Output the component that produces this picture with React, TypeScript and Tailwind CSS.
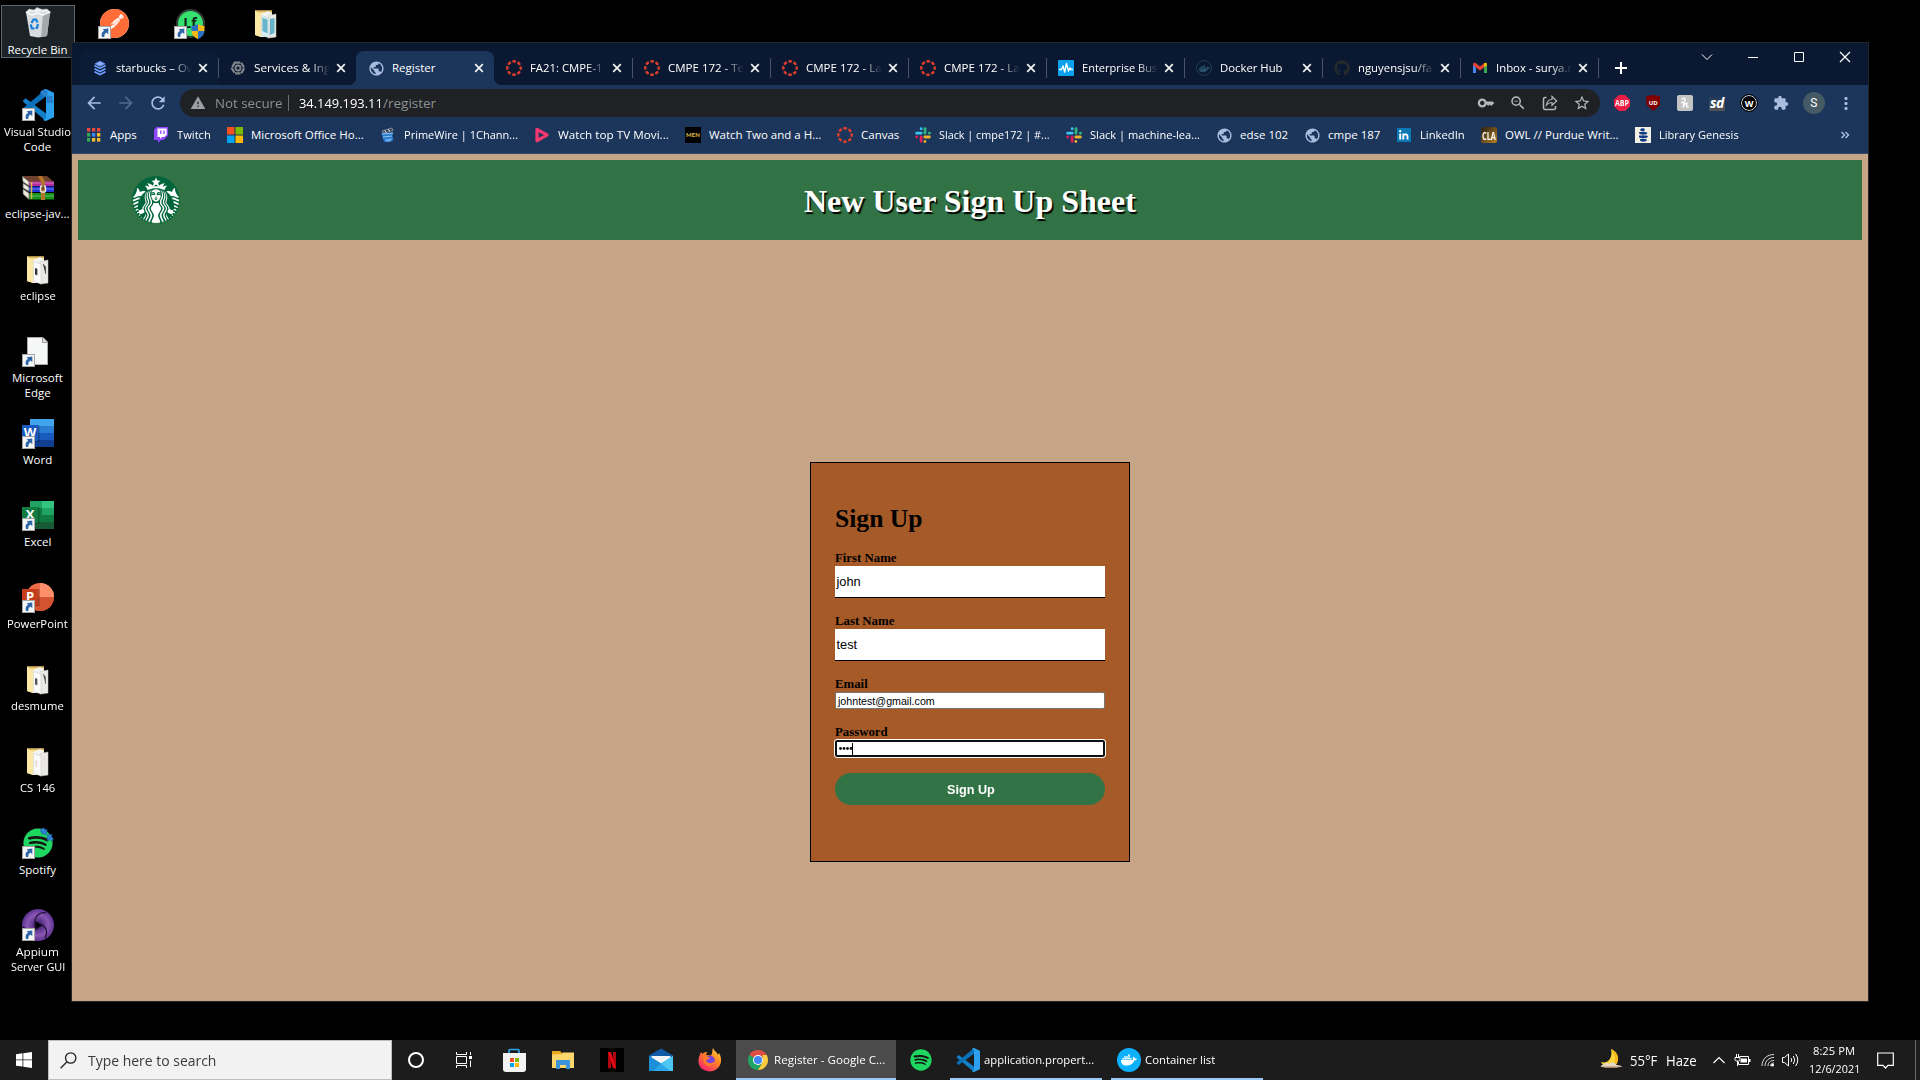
import React, { useLayoutEffect, useRef, useState } from "react";
import { SiStarbucks, SiPostman } from "react-icons/si";
import { FaDocker, FaGithub, FaSpotify } from "react-icons/fa";
import { MdKey, MdExtension, MdStarBorder, MdZoomOut, MdWarning, MdPublic, MdRefresh, MdArrowBack, MdArrowForward } from "react-icons/md";

/** Single line of text stretched or condensed to an exact width. */
function Fit({ w, className = "", children }: { w: number; className?: string; children: string }) {
  const ref = useRef<HTMLSpanElement>(null);
  const [scale, setScale] = useState(1);
  useLayoutEffect(() => {
    if (ref.current) setScale(w / ref.current.offsetWidth);
  }, [w, children]);
  return (
    <span className={"block shrink-0 whitespace-nowrap " + className} style={{ width: w }}>
      <span ref={ref} className="inline-block origin-left whitespace-nowrap" style={{ transform: `scaleX(${scale})` }}>
        {children}
      </span>
    </span>
  );
}

type SvgProps = { className?: string };

const Ring = () => (
  <svg viewBox="0 0 16 16" className="size-4">
    <circle cx="8" cy="8" r="6.7" fill="none" stroke="#e13f2b" strokeWidth="2.4" strokeDasharray="3.5 1.762" strokeDashoffset="1.75" />
  </svg>
);

const Globe = () => <MdPublic className="size-[17px] text-[#a9bddf]" />;

const Layers = () => (
  <svg viewBox="0 0 16 16" className="size-4" fill="none" stroke="#6f9dff" strokeWidth="1.7">
    <path d="M8 1.3 13 3.8 8 6.3 3 3.8Z" fill="#8bb0ff" stroke="#5c86ea" strokeWidth="1" />
    <path d="M2.500 5.600 8 8.400l5.500-2.800M2.500 8.700 8 11.500l5.500-2.800M2.500 11.700 8 14.500l5.500-2.800" />
  </svg>
);

const Hexagon = () => (
  <svg viewBox="0 0 16 16" className="size-4" fill="none" stroke="#80868b">
    <path d="M4.800 2.600h6.400L14.300 8l-3.100 5.400H4.800L1.700 8Z" strokeWidth="2.200" strokeDasharray="5.500 1" />
    <circle cx="8" cy="8" r="2.500" strokeWidth="1.800" />
  </svg>
);

const Pulse = () => (
  <svg viewBox="0 0 16 16" className="size-4">
    <rect width="16" height="16" rx="1" fill="#0aa1ee" />
    <path d="M1 9.500h2.500L5 6l1.700 6L8.500 3.500l2 7.500 1.500-3 1 1.500h2" fill="none" stroke="#fff" strokeWidth="1.400" strokeLinejoin="round" />
  </svg>
);

const Gmail = () => (
  <svg viewBox="0 0 16 16" className="size-4">
    <path d="M1 4.500v8.500h3V7.500Z" fill="#4285f4" />
    <path d="M15 4.500v8.500h-3V7.500Z" fill="#34a853" />
    <path d="M1 4.300C1 2.600 2.600 2.200 4 3.200l4 3.200 4-3.200v4.200L8 10.600 1 5.300Z" fill="#ea4335" />
    <path d="M12 3.200c1.400-1 3-.6 3 1.100v1L12 7.500Z" fill="#fbbc04" />
  </svg>
);

const DockerDim = () => (
  <span className="grid size-4 place-items-center rounded-full border border-[#1d3d52] text-[#27506a]">
    <FaDocker className="size-[11px]" />
  </span>
);

const Slack = () => (
  <svg viewBox="0 0 16 16" className="size-4" strokeWidth="2.800" strokeLinecap="round">
    <path d="M1.600 6.200h4.600M6.200 1.600v.2" stroke="#36c5f0" />
    <path d="M10 1.600v4.600M14.400 6.200h.1" stroke="#2eb67d" />
    <path d="M14.400 10h-4.600M9.900 14.400v.1" stroke="#ecb22e" />
    <path d="M6.100 14.400V9.900M1.600 10h.1" stroke="#e01e5a" />
  </svg>
);

const AppsGrid = () => (
  <svg viewBox="0 0 16 16" className="size-4">
    {["#e8453c", "#e8453c", "#e8453c", "#34a853", "#4285f4", "#f9bb2d", "#34a853", "#f9bb2d", "#f9bb2d"].map((c, i) => (
      <rect key={i} x={1 + (i % 3) * 5} y={1 + Math.floor(i / 3) * 5} width="3.300" height="3.600" fill={c} />
    ))}
  </svg>
);

const Twitch = () => (
  <svg viewBox="0 0 16 16" className="size-4">
    <path d="M3.500 0H15v8.500L10.500 13H8l-3 3v-3H1V3Z" fill="#9146ff" />
    <path d="M4.500 1.500h9.200v6.300L11.500 10H9l-2 2v-2H4.500Z" fill="#fff" />
    <path d="M7.800 3.500v3.600M11 3.500v3.600" stroke="#9146ff" strokeWidth="1.300" />
  </svg>
);

const MsLogo = () => (
  <svg viewBox="0 0 16 16" className="size-4">
    <path d="M0 0h7.500v7.500H0Z" fill="#f25022" />
    <path d="M8.500 0H16v7.500H8.500Z" fill="#7fba00" />
    <path d="M0 8.500h7.500V16H0Z" fill="#00a4ef" />
    <path d="M8.500 8.500H16V16H8.500Z" fill="#ffb900" />
  </svg>
);

const Clapper = () => (
  <svg viewBox="0 0 16 16" className="size-4">
    <path d="m2 4 10-3 1 2.500L3 6Z" fill="#30363f" stroke="#9fb2c4" strokeWidth=".7" />
    <path d="m4.500 3.500 2 1.700M8 2.400l2 1.600" stroke="#e8eef5" />
    <path d="M1.500 6.500 13 5.500l-.5 3 1 5-9 1.500L3 12Z" fill="#2878c8" />
    <path d="m2 7 11-.8M3 10l9-1" stroke="#8fc4f4" strokeWidth="1.200" />
    <path d="m5 12 7-.6-1 3-5 .6Z" fill="#63a9ea" />
  </svg>
);

const PlayPink = () => (
  <svg viewBox="0 0 16 16" className="size-4" fill="none" strokeLinejoin="round">
    <path d="M3 2.300 13 8 3 13.700Z" stroke="#f5386f" strokeWidth="3.200" />
    <path d="M5.500 5.800 9.500 8l-4 2.300Z" fill="#1b355b" />
  </svg>
);

const Men = () => (
  <span className="grid size-4 place-items-center bg-black font-['Lato'] text-[6px] leading-none font-black text-[#d9b84a]">MEN</span>
);

const LinkedIn = () => (
  <svg viewBox="0 0 16 16" className="size-4">
    <rect x="1" y="1" width="14" height="14" fill="#0a78b5" />
    <path d="M4.200 6.500v6M7.300 12.500v-6M7.300 9.500c0-2.800 4.200-3 4.200 0v3" fill="none" stroke="#fff" strokeWidth="1.900" />
    <circle cx="4.200" cy="4.100" r="1.200" fill="#fff" />
  </svg>
);

const Cla = () => (
  <span className="grid size-4 place-items-center overflow-hidden rounded-xs bg-linear-to-br from-[#2b2010] to-[#b98322]">
    <Fit w={14} className="text-[11px] leading-none font-bold text-white">CLA</Fit>
  </span>
);

const LibGen = () => (
  <svg viewBox="0 0 16 16" className="size-4">
    <rect width="16" height="16" fill="#f2f0e4" />
    <path d="M6 1.500h3l1 1.500-1 1H6L5 3ZM4 5h7l1.500 1-1.500 1.500H6.500L4.500 7ZM4 8.500h8l1 1-1.500 1.500H6L4 10.500ZM5 12h6l1 1-1.500 1.500h-4L5 13.500Z" fill="#113a84" />
    <path d="M8 1v14" stroke="#113a84" strokeWidth=".8" />
  </svg>
);

const VsCode = ({ className = "" }: SvgProps) => (
  <svg viewBox="0 0 32 32" className={className}>
    <path d="M1 11.500 3.500 9.300 24 24.500V32L1.300 13Z" fill="#1180c8" />
    <path d="M1 20.500 3.500 22.700 24 7.500V0L1.300 19Z" fill="#0a70b8" />
    <path d="M22.500 0 32 4v24l-9.500 4-1.200-1.500 2.700-1V2.500l-2.700-1Z" fill="#2ba3ef" />
    <path d="M24 0 32 4v24l-8 4Z" fill="#2aa0ee" />
  </svg>
);

const Shortcut = () => (
  <svg viewBox="0 0 13 13" className="absolute bottom-0 left-0 size-[13px]">
    <rect x=".5" y=".5" width="12" height="12" fill="#f6f6f6" stroke="#a5a5a5" />
    <path d="M4 11c-1-3.500.2-5.200 2.200-6L4.700 3.300 10.300 2.500v5.700L8.500 6.600C7 7.400 6.300 8.500 6.300 11Z" fill="#2d65a8" />
  </svg>
);

const SyncArrows = () => (
  <svg viewBox="0 0 16 16" className="absolute top-0 right-0 size-4" fill="#2d83cf" stroke="#1b65ad" strokeWidth=".6">
    <path d="m3 2 3-1 1 2 2-.5-.5 5-5-.5L5 5.500 2.500 5ZM9 8l5-.5-.7 2 2 2.500-1.500 2-2.500-1.500L9.700 14Z" />
  </svg>
);

const Folder = ({ ink = "#444", blue = false }: { ink?: string; blue?: boolean }) => (
  <svg viewBox="0 0 32 32" className="size-8">
    <path d="M5 3.500h17V29L11 30 5 28Z" fill="#f7dc8b" />
    <path d="M5 3.500h17v1.500H5Z" fill="#d9b25c" />
    <path d="M11 7 18 4l3.500 2v24l-3-.5L11 30Z" fill="#f4f4f2" />
    <path d="M18 8.500 26 7v23l-7 1Z" fill="#e9e9e6" stroke="#c4c4c0" strokeWidth=".5" />
    <path d="M11.500 8.500 19 11v20.300L11.500 28Z" fill={blue ? "#d8edf2" : "#fafafa"} stroke="#bbb" strokeWidth=".4" />
    {blue ? (
      <path d="m12.500 11 5 1.600v14l-5-2.600ZM20 12l4.500-1v15L20 28Z" fill="#66b4c9" />
    ) : (
      <path d="M13 15.500l2 .5v6l-2-1M21 11l2.500 3v7" fill={ink} stroke={ink} strokeWidth=".7" />
    )}
    <path d="m5 3.500 6 4V30l-6-2Z" fill="#fde9a6" />
  </svg>
);

const RecycleBin = () => (
  <svg viewBox="0 0 32 32" className="size-8">
    <path d="m4 5 3-3 5 1 3-2.500 5 2L25 2l3.500 3L26 10H6Z" fill="#eceeef" stroke="#aab0b4" strokeWidth=".6" />
    <path d="m4 5 24-.2L25 29l-9 1.500L8 29Z" fill="#d9dcde" />
    <path d="M21 7 28 5l-3 24-6 1.300Z" fill="#a4a9ac" />
    <path d="m4 5 6 3 5-2 6 2 7-3" fill="none" stroke="#fff" strokeWidth="1.300" />
    <path d="m9.500 16 2-3.500h2.500l1.500 3M8.500 17.500l1.500 4h2.500M16 17l-1 4h-1.500" fill="none" stroke="#1580dc" strokeWidth="2.200" />
  </svg>
);

const Books = () => (
  <svg viewBox="0 0 32 32" className="size-8">
    <path d="M0 5h25l7 6H7Z" fill="#70412c" />
    <path d="M7 10.500h25v4.500H7Z" fill="#b42c9d" />
    <path d="M7 15.500h25V21H7Z" fill="#2335d8" />
    <path d="M7 22h25v6.500H7Z" fill="#16951d" />
    <path d="m0 5 7 5.500v4.500L1 11ZM1 12l6 4v4.500L1 17ZM1 18l6 4v6.500L1 23Z" fill="#ece8dc" stroke="#555" strokeWidth=".7" />
    <path d="M7 12h25M7 18h25M7 25h25" stroke="#ffffff" strokeOpacity=".35" />
    <path d="M16 5h4l3 5v19h-4V11Z" fill="#b5742d" />
    <path d="M9.500 11v17" stroke="#d9b53c" strokeWidth="1.500" />
    <rect x="18.500" y="15" width="5" height="6" rx="1" fill="none" stroke="#e4e4e4" strokeWidth="1.400" />
    <path d="M21 14v5" stroke="#222" />
  </svg>
);

const BlankDoc = () => (
  <svg viewBox="0 0 32 32" className="size-8">
    <path d="M5.500 2.500H21L25.500 7v22.500h-20Z" fill="#f6f7f7" stroke="#aaa" />
    <path d="M20.500 2.500V7.500h5" fill="#ddd" stroke="#999" />
  </svg>
);

function Office({ letter, colors, tile, round }: { letter: string; colors: string[]; tile: string; round?: boolean }) {
  return (
    <span className="relative block size-8">
      <svg viewBox="0 0 32 32" className="size-8">
        {round ? (
          <>
            <circle cx="18" cy="16" r="14" fill={colors[0]} />
            <path d="M18 2a14 14 0 0 1 14 14H18Z" fill={colors[1]} />
            <path d="M4 16h28a14 14 0 0 1-28 0Z" fill={colors[2]} />
          </>
        ) : (
          colors.map((c, i) => <rect key={i} x="8" y={2 + i * 7} width="24" height="7" fill={c} />)
        )}
        {letter === "X" && <path d="M20 2h12v7H20Z" fill="#33c481" />}
        {letter === "X" && <path d="M20 9h12v7H20Z" fill="#21a366" />}
        {letter === "X" && <path d="M8 9h12v7H8Z" fill="#107c41" />}
        <path d="M8 8h9.500v17H8Z" fill="#000" fillOpacity=".25" />
        <rect y="8" width="16" height="16" fill={tile} />
      </svg>
      <span className="absolute top-[8px] left-0 w-4 text-center text-[13px] leading-[15px] font-bold text-white">{letter}</span>
    </span>
  );
}

const Appium = () => (
  <svg viewBox="0 0 32 32" className="size-8">
    <defs>
      <radialGradient id="appium">
        <stop offset=".2" stopColor="#4e2a7c" />
        <stop offset=".65" stopColor="#8a57b4" />
        <stop offset="1" stopColor="#5f3291" />
      </radialGradient>
    </defs>
    <circle cx="16" cy="16" r="16" fill="url(#appium)" />
    <path d="M13 12.500 20 16l-6 4.500Z" fill="#000" />
    <path d="M13 20V11C14 6 19 2.500 24 4M12.500 12 21 16.500c4 3 4.500 8 2 12.500M20.500 16 13 20.500C9 23 4 21 1 18" fill="none" stroke="#1c0c30" strokeWidth="1.200" />
  </svg>
);

const Spotify = ({ className = "" }: SvgProps) => (
  <span className={"grid place-items-center rounded-full bg-[#191414] text-[#1ed760] " + className}>
    <FaSpotify className="size-full" />
  </span>
);

const Postman = () => (
  <span className="grid size-[29px] place-items-center rounded-full bg-white text-[#ff6c37]">
    <SiPostman className="size-full" />
  </span>
);

const Lockfile = () => (
  <span className="relative grid size-[29px] place-items-center rounded-full border-[2px] border-[#333b38] bg-[#36e06f] text-[14px] leading-none font-bold text-[#10231a]">
    Lf
    <svg viewBox="0 0 14 15" className="absolute -right-[2px] -bottom-[3px] h-[15px] w-[14px]">
      <path d="M7 0c2 1.300 4 2 6.500 2v5H7Z" fill="#f7b916" />
      <path d="M7 0C5 1.300 3 2 .5 2v5H7Z" fill="#2a6fc4" />
      <path d="M.5 7H7v8C3.500 13.500.8 11 .5 7Z" fill="#f7b916" />
      <path d="M13.500 7H7v8c3.500-1.500 6.200-4 6.500-8Z" fill="#2a6fc4" />
    </svg>
  </span>
);

type DeskItem = { icon: React.ReactNode; lines: [string, number][]; shortcut?: boolean; sync?: boolean; selected?: boolean };

const desk: DeskItem[] = [
  { icon: <RecycleBin />, lines: [["Recycle Bin", 60]], selected: true },
  { icon: <VsCode className="size-8" />, lines: [["Visual Studio", 67], ["Code", 28]], shortcut: true, sync: true },
  { icon: <Books />, lines: [["eclipse-jav...", 65]] },
  { icon: <Folder ink="#333" />, lines: [["eclipse", 36]] },
  { icon: <BlankDoc />, lines: [["Microsoft", 51], ["Edge", 26]], shortcut: true },
  { icon: <Office letter="W" tile="#185abd" colors={["#41a5ee", "#2b7cd3", "#185abd", "#103f91"]} />, lines: [["Word", 29]], shortcut: true },
  { icon: <Office letter="X" tile="#107c41" colors={["#21a366", "#21a366", "#107c41", "#185c37"]} />, lines: [["Excel", 27]], shortcut: true },
  { icon: <Office letter="P" tile="#c43e1c" colors={["#ed6c47", "#ff8f6b", "#d35230"]} round />, lines: [["PowerPoint", 61]], shortcut: true },
  { icon: <Folder ink="#555" />, lines: [["desmume", 53]] },
  { icon: <Folder ink="#eedcdc" />, lines: [["CS 146", 35]] },
  { icon: <Spotify className="size-[30px]" />, lines: [["Spotify", 37]], shortcut: true, sync: true },
  { icon: <Appium />, lines: [["Appium", 43], ["Server GUI", 54]], shortcut: true },
];

function DesktopIcon({ item }: { item: DeskItem }) {
  return (
    <div className="flex h-[82px] w-[76px] flex-col items-center pt-[1px]">
      {item.selected && <span className="absolute top-[5px] left-px h-[53px] w-[74px] border border-[#5d676d] bg-[#1b2328]" />}
      <div className="relative grid size-8 shrink-0 place-items-center">
        {item.icon}
        {item.sync && <SyncArrows />}
        {item.shortcut && <Shortcut />}
      </div>
      <div className="relative mt-[3px] mr-px flex flex-col items-center text-[11.500px] leading-[15px] text-white">
        {item.lines.map(([t, w]) => (
          <Fit key={t} w={w}>{t}</Fit>
        ))}
      </div>
    </div>
  );
}

const tabs: { icon: React.ReactNode; title: string; w: number; active?: boolean }[] = [
  { icon: <Layers />, title: "starbucks – Ov", w: 76 },
  { icon: <Hexagon />, title: "Services & Ing", w: 76 },
  { icon: <Globe />, title: "Register", w: 43, active: true },
  { icon: <Ring />, title: "FA21: CMPE-1", w: 73 },
  { icon: <Ring />, title: "CMPE 172 - Te", w: 76 },
  { icon: <Ring />, title: "CMPE 172 - La", w: 76 },
  { icon: <Ring />, title: "CMPE 172 - La", w: 76 },
  { icon: <Pulse />, title: "Enterprise Bus", w: 75 },
  { icon: <DockerDim />, title: "Docker Hub", w: 63 },
  { icon: <FaGithub className="size-4 text-[#24292e]" />, title: "nguyensjsu/fa", w: 74 },
  { icon: <Gmail />, title: "Inbox - surya.r", w: 76 },
];

const bookmarks: [React.ReactNode, string, number][] = [
  [<AppsGrid />, "Apps", 27],
  [<Twitch />, "Twitch", 34],
  [<MsLogo />, "Microsoft Office Ho...", 113],
  [<Clapper />, "PrimeWire | 1Chann...", 114],
  [<PlayPink />, "Watch top TV Movi...", 111],
  [<Men />, "Watch Two and a H...", 112],
  [<Ring />, "Canvas", 38],
  [<Slack />, "Slack | cmpe172 | #...", 111],
  [<Slack />, "Slack | machine-lea...", 110],
  [<Globe />, "edse 102", 48],
  [<Globe />, "cmpe 187", 52],
  [<LinkedIn />, "LinkedIn", 45],
  [<Cla />, "OWL // Purdue Writ...", 114],
  [<LibGen />, "Library Genesis", 80],
];

const CloseX = () => (
  <svg viewBox="0 0 10 10" className="size-[10px]" stroke="#f1f3f4" strokeWidth="1.700">
    <path d="m1.200 1.200 7.600 7.600M8.800 1.200 1.200 8.800" />
  </svg>
);

function TabStrip() {
  return (
    <div className="flex h-[42px] bg-[#0a1931] pt-2 pl-2">
      {tabs.map((t, i) => (
        <div
          key={i}
          className={
            t.active
              ? "relative flex h-[34px] w-[138px] shrink-0 items-center rounded-t-lg bg-[#1b355b] pl-3"
              : "relative flex h-[34px] w-[138px] shrink-0 items-center pl-3"
          }
        >
          {i === 0 && <span className="absolute inset-0 rounded-t-lg bg-[#0b1c36]" />}
          {t.active && (
            <>
              <span className="absolute bottom-0 -left-2 size-2 bg-[radial-gradient(circle_at_0_0,#0a1931_8px,#1b355b_8.500px)]" />
              <span className="absolute -right-2 bottom-0 size-2 bg-[radial-gradient(circle_at_100%_0,#0a1931_8px,#1b355b_8.500px)]" />
            </>
          )}
          <span className="relative grid size-4 shrink-0 place-items-center">{t.icon}</span>
          <div
            className={
              t.w > 70
                ? "relative ml-2 w-[76px] shrink-0 overflow-hidden mask-r-from-[74%] mask-r-to-100% text-[11.500px] leading-4 text-white"
                : "relative ml-2 w-[76px] shrink-0 overflow-hidden text-[11.500px] leading-4 text-white"
            }
          >
            <Fit w={t.w}>{t.title}</Fit>
          </div>
          <span className="relative ml-[6px]"><CloseX /></span>
          {i !== 1 && i !== 2 && <span className="absolute top-[7px] -right-px h-5 w-px bg-[#49566a]" />}
        </div>
      ))}
      <svg viewBox="0 0 12 12" className="mt-[11px] ml-[17px] size-3" stroke="#fff" strokeWidth="2">
        <path d="M6 0v12M0 6h12" />
      </svg>
      <div className="flex flex-1 justify-end">
        <div className="flex h-3 pr-[17px]">
          <svg viewBox="0 0 12 12" className="mr-[34px] size-3" fill="none" stroke="#fff"><path d="m1 3.500 5 5 5-5" /></svg>
          <svg viewBox="0 0 12 12" className="mr-[34px] size-3" fill="none" stroke="#fff"><path d="M1 6.500h10" /></svg>
          <svg viewBox="0 0 12 12" className="mr-[34px] size-3" fill="none" stroke="#fff"><path d="M1.500 1.500h9v9h-9Z" /></svg>
          <svg viewBox="0 0 12 12" className="size-3" fill="none" stroke="#fff" strokeWidth="1.200"><path d="m1 1 10 10M11 1 1 11" /></svg>
        </div>
      </div>
    </div>
  );
}

function Toolbar() {
  return (
    <div className="flex h-9 items-center bg-[#1b355b] pl-[6px]">
      <div className="mr-[6px] flex w-24 justify-around text-[#a9bddf]">
        <MdArrowBack className="size-5" />
        <MdArrowForward className="size-5 text-[#53698d]" />
        <MdRefresh className="size-5" />
      </div>
      <div className="flex h-7 w-[1420px] shrink-0 items-center rounded-full bg-[#202124] pr-[9px] pl-[10px] text-[13.500px] leading-5 text-[#9aa0a6]">
        <MdWarning className="size-4" />
        <Fit w={67} className="ml-[9px] text-[#8c9196]">Not secure</Fit>
        <span className="ml-[6px] h-4 w-px bg-[#6b6e72]" />
        <Fit w={84} className="ml-[10px] text-white">34.149.193.11</Fit>
        <Fit w={53} className="text-[#8c9196]">/register</Fit>
        <div className="ml-auto flex items-center gap-[14px] text-[#b4b8bb]">
          <MdKey className="size-[18px]" />
          <MdZoomOut className="size-[18px]" />
          <svg viewBox="0 0 18 18" className="size-[18px]" fill="none" stroke="currentColor" strokeWidth="1.500">
            <path d="M5.500 3.500H4A1.500 1.500 0 0 0 2.500 5v9A1.500 1.500 0 0 0 4 15.500h9a1.500 1.500 0 0 0 1.500-1.500v-2" />
            <path d="M5.500 11c.5-4 2.500-5.500 5.500-5.500v-3L15.700 7 11 11.300V8.500c-2.500 0-4 .5-5.500 2.500Z" strokeWidth="1.200" />
          </svg>
          <MdStarBorder className="size-[18px]" />
        </div>
      </div>
      <div className="flex w-[254px] items-center justify-between pl-[14px]">
        <span className="grid size-4 place-items-center bg-[#ed1e45] text-white [clip-path:polygon(30%_0,70%_0,100%_30%,100%_70%,70%_100%,30%_100%,0_70%,0_30%)]">
          <Fit w={14} className="text-[8px] leading-none font-bold">ABP</Fit>
        </span>
        <span className="grid h-4 w-[14px] place-items-center bg-[#800000] text-[6px] leading-none font-bold text-white [clip-path:polygon(0_8%,50%_0,100%_8%,100%_60%,50%_100%,0_60%)]">
          UD
        </span>
        <span className="grid size-4 place-items-center rounded-xs bg-[#c4c4c4]">
          <svg viewBox="0 0 16 16" className="size-4" fill="none" stroke="#fff" strokeWidth="1.300">
            <path d="M5 4.500C6 2.500 8.500 2.500 8 5L6 12.500C7 9.500 10.500 6.500 10.200 9l-.6 2c-.1 1.500 1 1.500 2 .5M4 7.500h2.500" />
          </svg>
        </span>
        <span className="grid size-4 place-items-center bg-linear-to-b from-transparent to-[#555] text-[14px] leading-none font-bold tracking-tighter text-white italic">sd</span>
        <span className="grid size-4 place-items-center rounded-full border border-[#ddd] bg-black text-[9px] leading-none font-bold text-white outline-1 outline-black">W</span>
        <MdExtension className="size-4 text-[#a9bddf]" />
        <span className="-mx-[3px] grid size-[22px] place-items-center rounded-full bg-[#455a64] font-['Roboto'] text-[12px] leading-none text-white">S</span>
        <svg viewBox="0 0 16 16" className="size-4" fill="#a9bddf">
          <rect x="6.500" y="2" width="3" height="3" rx="1" /><rect x="6.500" y="7" width="3" height="3" rx="1" /><rect x="6.500" y="12" width="3" height="3" rx="1" />
        </svg>
      </div>
    </div>
  );
}

function BookmarkBar() {
  return (
    <div className="flex h-[33px] items-center gap-4 border-b border-[#32496d] bg-[#1b355b] pb-1 pl-[14px]">
      {bookmarks.map(([icon, label, w]) => (
        <div key={label} className="flex shrink-0 items-center gap-2 text-[11.500px] leading-4 text-white">
          <span className="grid size-4 place-items-center">{icon}</span>
          <Fit w={w}>{label}</Fit>
        </div>
      ))}
      <svg viewBox="0 0 10 8" className="mr-[18px] ml-auto h-2 w-[10px]" fill="none" stroke="#a9bddf" strokeWidth="1.500">
        <path d="m1.500 1 3 3-3 3M5.500 1l3 3-3 3" />
      </svg>
    </div>
  );
}

function RegisterPage() {
  return (
    <div className="flex flex-1 flex-col bg-[#c5a585] p-[6px]">
      <header className="relative flex h-20 items-center justify-center bg-[#327345] pt-px">
        <span className="absolute top-4 left-[54px] grid size-12 place-items-center text-[#00653b]">
          <span className="absolute size-[46px] rounded-full bg-white" />
          <SiStarbucks className="relative size-12" />
        </span>
        <h1 className="mt-px font-['Liberation_Serif'] text-[32px] leading-10 font-bold text-white [text-shadow:1.600px_1.600px_1px_#000]">
          <Fit w={332}>New User Sign Up Sheet</Fit>
        </h1>
      </header>
      <form className="mx-auto mt-[222px] flex h-[400px] w-80 flex-col border border-black bg-[#a65a28] px-6 pt-[41px] text-black">
        <h2 className="font-['Liberation_Serif'] text-[25.600px] leading-[30px] font-bold">
          <Fit w={88}>Sign Up</Fit>
        </h2>
        <div className="mt-[17px] font-['Liberation_Serif'] text-[12.800px] leading-[15px] font-bold">First Name</div>
        <div className="h-8 border-b border-black bg-white pl-[1.500px] font-['Liberation_Sans'] text-[12.800px] leading-[31px]">john</div>
        <div className="mt-4 font-['Liberation_Serif'] text-[12.800px] leading-[15px] font-bold">Last Name</div>
        <div className="h-8 border-b border-black bg-white pl-[1.500px] font-['Liberation_Sans'] text-[12.800px] leading-[31px]">test</div>
        <div className="mt-4 font-['Liberation_Serif'] text-[12.800px] leading-[15px] font-bold">Email</div>
        <div className="h-[17px] rounded-xs border border-[#767676] bg-white pl-[2px] font-['Liberation_Sans'] text-[10.670px] leading-4">johntest@gmail.com</div>
        <div className="mt-4 font-['Liberation_Serif'] text-[12.800px] leading-[15px] font-bold">Password</div>
        <div className="flex h-[17px] items-center rounded-xs border-2 border-[#101010] bg-white pl-[2px] outline-1 outline-white">
          <svg viewBox="0 0 14 12" className="h-3 w-[14px]">
            {[1.5, 5, 8.5, 12].map((x) => <circle key={x} cx={x} cy="5.500" r="1.400" fill="#111" />)}
            <path d="M13.500 0v12" stroke="#000" />
          </svg>
        </div>
        <button className="mt-4 flex h-8 items-center justify-center rounded-full bg-[#327345] pt-px pl-px font-['Liberation_Sans'] text-[12.800px] font-bold text-white">
          <Fit w={47.5}>Sign Up</Fit>
        </button>
      </form>
    </div>
  );
}

const Moon = () => (
  <svg viewBox="0 0 24 24" className="ml-[336px] size-6 shrink-0">
    <path d="M12 1c8 3 9 12 4 17H6c-2-1-3-2-4-4 7 2 12-4 10-13Z" fill="#fcd63c" />
    <path d="M12 1c8 3 9 12 4 17 0-6 1-11-4-17Z" fill="#f6b71a" />
    <path d="M4 17c2-3 5-2 6-1 2-2 6-2 7 1 3 0 6 1 6 2H3c-2 0-1-2 1-2Z" fill="#e9d9c7" />
    <path d="M2 18.500h20l-4 1.500H6Z" fill="#a58468" />
  </svg>
);

function Taskbar() {
  const cell = "grid h-10 w-[49px] shrink-0 place-items-center";
  return (
    <div className="flex h-10 w-[1920px] items-center bg-[#1c1c1c] text-white">
      <div className="grid h-10 w-12 shrink-0 place-items-center">
        <svg viewBox="0 0 16 16" className="size-4" fill="#fff">
          <path d="M0 2.200 6.500 1.300v6.200H0ZM7.300 1.200 16 0v7.500H7.300ZM0 8.300h6.500v6.300L0 13.700ZM7.300 8.300H16V16l-8.700-1.200Z" />
        </svg>
      </div>
      <div className="flex h-10 w-[344px] shrink-0 items-center border border-[#bdbdbd] bg-[#f2f2f2] pl-[11px]">
        <svg viewBox="0 0 17 17" className="size-[17px]" fill="none" stroke="#222" strokeWidth="1.300">
          <circle cx="10.700" cy="6" r="5.200" /><path d="M7 9.800.6 16.200" />
        </svg>
        <Fit w={128} className="mt-[2px] ml-[11px] text-[14.500px] leading-5 text-[#3a3a3a]">Type here to search</Fit>
      </div>
      <div className="grid h-10 w-12 shrink-0 place-items-center">
        <span className="size-4 rounded-full border-2 border-white" />
      </div>
      <div className="grid h-10 w-12 shrink-0 place-items-center">
        <svg viewBox="0 0 16 16" className="size-4" fill="none" stroke="#fff">
          <path d="M.5 0v2.500h10V0M.5 16v-2.500h10V16M.5 4.500h10v7H.5ZM14.500 0v3M14.500 8.500V15" />
          <rect x="13" y="4" width="3" height="3" fill="#fff" stroke="none" />
        </svg>
      </div>
      <div className="ml-px mr-px flex w-[246px] shrink-0">
        <span className={cell}>
          <svg viewBox="0 0 24 24" className="size-6">
            <path d="M7 5V2.500Q7 1.500 8 1.500h8q1 0 1 1V5" fill="none" stroke="#2ba5ea" strokeWidth="1.700" />
            <path d="M1 5h23v16q0 3-3 3H4q-3 0-3-3Z" fill="#f3f3f3" />
            <path d="M8 10h4v4H8Z" fill="#f25022" /><path d="M13 10h4v4h-4Z" fill="#7fba00" /><path d="M8 15h4v4H8Z" fill="#00a4ef" /><path d="M13 15h4v4h-4Z" fill="#ffb900" />
          </svg>
        </span>
        <span className={cell}>
          <svg viewBox="0 0 24 24" className="size-6">
            <path d="M1 3h8l2 2h12v15H1Z" fill="#e8a81c" /><path d="M1 6.500 11 6l1-1.500h11V20H1Z" fill="#fcd66b" />
            <path d="M5 21v-8q0-1 1-1h12q1 0 1 1v8h-4v-4H9v4Z" fill="#3b93da" />
          </svg>
        </span>
        <span className={cell}>
          <svg viewBox="0 0 24 24" className="size-6">
            <path fill="#000" d="M0 0h24v24H0Z" /><path d="M8 4h3v16l-3 .4ZM13 4h3v16.400L13 20Z" fill="#b1060f" /><path d="M8 4h3l5 16.400-3-.4Z" fill="#e50914" />
          </svg>
        </span>
        <span className={cell}>
          <svg viewBox="0 0 24 24" className="size-6">
            <path d="M0 7.500 12 .5l12 7v4H0Z" fill="#0f5ba8" /><path d="M2.500 8h19v4L12 16l-9.500-4Z" fill="#f2f5f7" />
            <path d="M0 8v15h24V8l-12 7.500Z" fill="#2aa6ea" /><path d="m24 8-12 7.500 9 7.500h3Z" fill="#4dc5f5" /><path d="M0 8v15h4l8-7.500Z" fill="#1c8fd8" />
          </svg>
        </span>
        <span className={cell}>
          <svg viewBox="0 0 24 24" className="size-6">
            <defs>
              <linearGradient id="fox" x1="1" y1="0" x2=".3" y2="1">
                <stop stopColor="#ffe14d" /><stop offset=".45" stopColor="#ff8a1f" /><stop offset="1" stopColor="#f5256d" />
              </linearGradient>
            </defs>
            <path d="M15 0c1 3 4 4 5 7l1-2c2 3 3 8 1 12-3 6-10 8-16 5C1 20-.500 14 1 9l2-5 1.500 2C6 4 8 4 9 4l-1 3 5 .5C15 5 14 2 15 0Z" fill="url(#fox)" />
            <circle cx="12" cy="12.500" r="4.800" fill="#7542e0" />
            <path d="M5 9c3-1 5 0 8 1-2 0-3 2-5 2 1 4 6 4 9 1-1 5-7 7-10 3C5 14 5 11 5 9Z" fill="#ff7a25" />
          </svg>
        </span>
      </div>
      <div className="flex h-10 w-40 shrink-0 items-center border-b-2 border-[#99c9f7] bg-[#4b4b4b] pt-[2px] pl-[11px]">
        <svg viewBox="0 0 24 24" className="size-[22px]">
          <path d="M12 12 2.500 6.500A11 11 0 0 1 21.500 6.500Z" fill="#de4f43" />
          <path d="M2.500 6.500A11 11 0 0 0 12 23l5-8.500-5-2.500Z" fill="#1fa463" /><path d="M21.500 6.500A11 11 0 0 1 12 23l5-8.500V6.500Z" fill="#fdcd40" />
          <path d="M12 6.500h9.500L16 4H7Z" fill="#de4f43" /><circle cx="12" cy="12" r="5.500" fill="#fff" /><circle cx="12" cy="12" r="4.400" fill="#4285f4" />
        </svg>
        <Fit w={111} className="ml-[5px] text-[11.500px] leading-4">Register - Google C...</Fit>
      </div>
      <div className="grid h-10 w-[50px] shrink-0 place-items-center"><Spotify className="size-[22px]" /></div>
      <div className="ml-[4px] flex h-10 w-[152px] shrink-0 items-center border-b-2 border-[#99c9f7] pt-[2px] pl-[6px]">
        <VsCode className="size-6" />
        <Fit w={110} className="ml-1 text-[11.500px] leading-4">application.propert...</Fit>
      </div>
      <div className="ml-[9px] flex h-10 w-[152px] shrink-0 items-center border-b-2 border-[#99c9f7] pt-[2px] pl-[6px]">
        <span className="grid size-6 place-items-center rounded-full bg-[#0db0fb]"><FaDocker className="size-4" /></span>
        <Fit w={70} className="ml-1 text-[11.500px] leading-4">Container list</Fit>
      </div>
      <Moon />
      <Fit w={27} className="mt-[2px] ml-[7px] text-[14px] leading-5">55°F</Fit>
      <Fit w={31} className="mt-[2px] ml-[9px] text-[14px] leading-5">Haze</Fit>
      <svg viewBox="0 0 12 8" className="ml-[16px] h-2 w-3 shrink-0" fill="none" stroke="#fff" strokeWidth="1.200"><path d="m.5 7 5.500-5.500L11.500 7" /></svg>
      <svg viewBox="0 0 17 12" className="ml-[9px] h-3 w-[17px] shrink-0" fill="none" stroke="#fff">
        <path d="M5.500 2.500h9v8h-10V8" /><path d="M7 4.500h6v4H6.500V7ZM15 5h1.500v3H15Z" fill="#fff" stroke="none" /><path d="M1 3.500h5v2q0 1.500-1.500 1.500h-2Q1 7 1 5.500ZM2.500 0v3M4.500 0v3M3.500 7v5" />
      </svg>
      <svg viewBox="0 0 14 14" className="ml-[10px] size-[14px] shrink-0" fill="none" stroke="#ddd">
        <path d="M1 13C1 6 6 1.500 13 1.500M4 13c0-5 4-8.500 9-8.500M7 13c0-3.500 2.500-5.500 6-5.500" /><circle cx="11.500" cy="12" r="1.500" fill="#fff" stroke="none" /><path d="M9.500 13c0-2 1.500-3 3.500-3" />
      </svg>
      <svg viewBox="0 0 17 14" className="ml-[7px] h-[14px] w-[17px] shrink-0" fill="none" stroke="#fff">
        <path d="M.5 4.500h2L6.500 1v12L2.500 9.500h-2ZM9 5q1.500 2 0 4M11.300 3q3 4 0 8M13.600 1q4.400 6 0 12" />
      </svg>
      <div className="ml-[9px] flex w-[52px] shrink-0 flex-col items-center text-[11.500px] leading-[18px]">
        <Fit w={42}>8:25 PM</Fit>
        <Fit w={51}>12/6/2021</Fit>
      </div>
      <svg viewBox="0 0 17 17" className="ml-[17px] size-[17px] shrink-0" fill="none" stroke="#fff" strokeWidth="1.200">
        <path d="M.7 1h15.600v12.300H11L8.500 16 6 13.300H.7Z" />
      </svg>
      <span className="mr-1 ml-auto h-10 w-px bg-[#6a6a6a]" />
    </div>
  );
}

export default function App() {
  return (
    <div className="relative flex h-[1080px] w-[1920px] flex-col overflow-hidden bg-black font-['Open_Sans',sans-serif]">
      <div className="flex h-[1040px] pt-[6px]">
        <div className="flex flex-col">
          {desk.map((d) => <DesktopIcon key={d.lines[0][0]} item={d} />)}
        </div>
        <DesktopIcon item={{ icon: <Postman />, lines: [], shortcut: true }} />
        <DesktopIcon item={{ icon: <Lockfile />, lines: [], shortcut: true }} />
        <DesktopIcon item={{ icon: <Folder blue />, lines: [] }} />
      </div>
      <div className="absolute top-[42px] left-[71px] flex h-[960px] w-[1798px] flex-col border border-[#22262b]">
        <TabStrip />
        <Toolbar />
        <BookmarkBar />
        <RegisterPage />
      </div>
      <Taskbar />
    </div>
  );
}
